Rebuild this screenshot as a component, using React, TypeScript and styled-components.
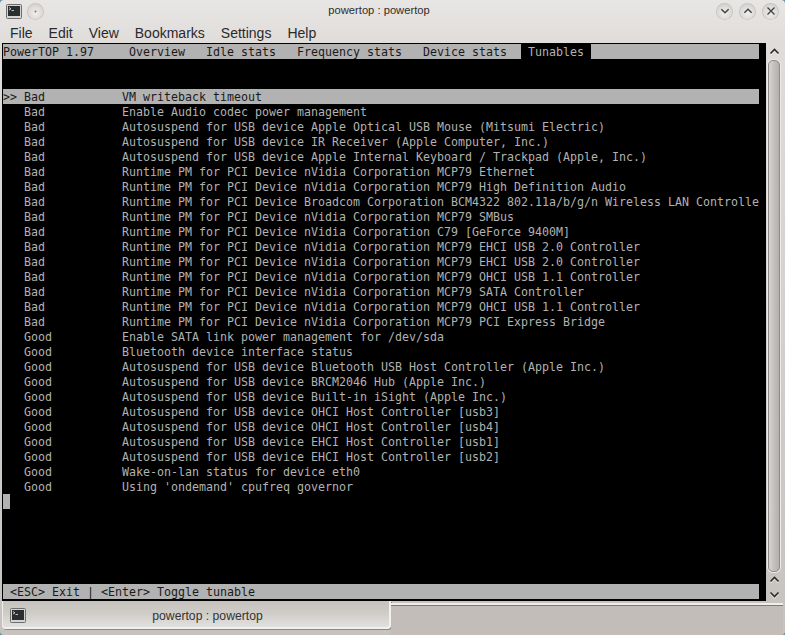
import React from 'react'
import styled, { createGlobalStyle } from 'styled-components'

const GlobalStyle = createGlobalStyle`
  html, body {
    margin: 0;
    padding: 0;
    background: #5a8fa8;
  }
  * {
    box-sizing: border-box;
  }
`

const Window = styled.div`
  width: 785px;
  height: 635px;
  display: flex;
  flex-direction: column;
  overflow: hidden;
  background: linear-gradient(180deg, #e8e6e4 0%, #dfdcda 7%, #c6c2be 100%);
  border-radius: 4px;
`

const TitleBar = styled.div`
  height: 22px;
  display: flex;
  align-items: center;
  padding: 0 7px 0 6px;
  flex: none;
`

const TitleText = styled.div`
  flex: 1;
  text-align: center;
  font: 11.2px 'Liberation Sans', sans-serif;
  color: #2e2e2e;
  padding: 0 2px 2px 0;
`

const RoundButton = styled.div<{ $gap?: number }>`
  width: 15px;
  height: 15px;
  border-radius: 50%;
  margin-left: ${({ $gap }) => $gap ?? 0}px;
  display: flex;
  align-items: center;
  justify-content: center;
  background: radial-gradient(circle at 50% 60%, #f1f0ee 0%, #dcd9d7 60%, #b9b6b3 100%);
  box-shadow: 0 0 0 1px #c6c3c0, 0 1px 1px #f4f3f2;
`

const MenuBar = styled.div`
  height: 21px;
  flex: none;
  display: flex;
  align-items: center;
  gap: 16px;
  padding: 0 0 0 10px;
  font: 14px 'Liberation Sans', sans-serif;
  color: #2a2a2a;
`

const Body = styled.div`
  flex: none;
  height: 558px;
  display: flex;
  padding-left: 2px;
`

const Terminal = styled.div`
  width: 764px;
  height: 558px;
  flex: none;
  padding: 1px 7px 0 1px;
  background: #000;
  color: #b2b2b2;
  font: 11.63px/17px 'DejaVu Sans Mono', monospace;
  white-space: pre;
`

const Header = styled.div`
  height: 15px;
  display: flex;
  background: #b2b2b2;
  color: #1a1a1a;
`

const HeaderCell = styled.span<{ $active?: boolean; $cols: number }>`
  width: ${({ $cols }) => $cols * 7}px;
  flex: none;
  background: ${({ $active }) => ($active ? '#000' : 'transparent')};
  color: ${({ $active }) => ($active ? '#b2b2b2' : '#1a1a1a')};
`

const Spacer = styled.div<{ $rows: number }>`
  height: ${({ $rows }) => $rows * 15}px;
`

const Row = styled.div<{ $selected?: boolean }>`
  height: 15px;
  display: grid;
  grid-template-columns: 21px 98px 1fr;
  overflow: hidden;
  background: ${({ $selected }) => ($selected ? '#b2b2b2' : 'transparent')};
  color: ${({ $selected }) => ($selected ? '#1a1a1a' : '#b2b2b2')};
`

const Cell = styled.span`
  overflow: hidden;
`

const Cursor = styled.div`
  width: 7px;
  height: 15px;
  background: #b2b2b2;
`

const StatusBar = styled.div`
  height: 15px;
  padding-left: 7px;
  background: #b2b2b2;
  color: #1a1a1a;
`

const Scrollbar = styled.div`
  width: 19px;
  height: 558px;
  flex: none;
  display: flex;
  flex-direction: column;
  align-items: center;
  padding-right: 3px;
`

const ArrowSlot = styled.div<{ $h: number }>`
  height: ${({ $h }) => $h}px;
  flex: none;
  display: flex;
  align-items: center;
  justify-content: center;
  filter: drop-shadow(0 1px 0 #f2f0ee);
`

const Thumb = styled.div`
  width: 12px;
  height: 512px;
  flex: none;
  border-radius: 5px;
  border: 1px solid #8f8b88;
  box-shadow: 0 0 0 1px #eeecea;
  background: linear-gradient(90deg, #d8d5d2 0%, #c6c2bf 45%, #b3afac 100%);
`

const TabBar = styled.div`
  flex: 1;
  display: flex;
  padding: 0 2px;
`

const Tab = styled.div`
  width: 389px;
  height: 28px;
  flex: none;
  display: grid;
  grid-template-columns: 34px 1fr;
  align-items: center;
  padding: 3px 4px 0 7px;
  border-left: 1px solid #f0eeec;
  border-right: 2px solid #f2f0ee;
  border-bottom: 2px solid #f2f0ee;
  border-radius: 0 0 4px 4px;
  box-shadow: 1px 1px 0 #8b8885;
  background: linear-gradient(180deg, #c6c2be 0%, #cfccc8 45%, #e2e0de 100%);
  font: 12.2px 'Liberation Sans', sans-serif;
  color: #333;
`

const TabLabel = styled.span`
  text-align: center;
  padding-right: 14px;
`

const TabFiller = styled.div`
  flex: 1;
  margin-top: 2px;
  border-top: 2px solid #f0eeec;
  box-shadow: inset 0 1px 0 #7d7a77;
  background: #c2bdb9;
`

function TerminalIcon({ w, h }: { w: number; h: number }) {
  return (
    <svg width={w} height={h} viewBox="0 0 16 15" preserveAspectRatio="none">
      <rect x="0.5" y="0.5" width="15" height="14" rx="1" fill="#d6d4d2" stroke="#6f6d6b" />
      <rect x="2" y="2" width="12" height="10" fill="#2b2e30" />
      <path d="M3 3.5 L5 4.8 L3 6 M5.5 6.5 H8" stroke="#e8e8e8" strokeWidth="0.8" fill="none" />
    </svg>
  )
}

function Chevron({ up, size = 11, color = '#2a2a2a' }: { up?: boolean; size?: number; color?: string }) {
  return (
    <svg width={size} height={size} viewBox="0 0 11 11">
      <path
        d={up ? 'M1.5 7.5 L5.5 3.5 L9.5 7.5' : 'M1.5 3.5 L5.5 7.5 L9.5 3.5'}
        stroke={color}
        strokeWidth="1.6"
        fill="none"
      />
    </svg>
  )
}

const MENU = ['File', 'Edit', 'View', 'Bookmarks', 'Settings', 'Help']

const TABS: [string, number][] = [
  ['PowerTOP 1.97', 18],
  ['Overview', 11],
  ['Idle stats', 13],
  ['Frequency stats', 18],
  ['Device stats', 14],
]

const TUNABLES: [string, string][] = [
  ['Bad', 'VM writeback timeout'],
  ['Bad', 'Enable Audio codec power management'],
  ['Bad', 'Autosuspend for USB device Apple Optical USB Mouse (Mitsumi Electric)'],
  ['Bad', 'Autosuspend for USB device IR Receiver (Apple Computer, Inc.)'],
  ['Bad', 'Autosuspend for USB device Apple Internal Keyboard / Trackpad (Apple, Inc.)'],
  ['Bad', 'Runtime PM for PCI Device nVidia Corporation MCP79 Ethernet'],
  ['Bad', 'Runtime PM for PCI Device nVidia Corporation MCP79 High Definition Audio'],
  ['Bad', 'Runtime PM for PCI Device Broadcom Corporation BCM4322 802.11a/b/g/n Wireless LAN Controlle'],
  ['Bad', 'Runtime PM for PCI Device nVidia Corporation MCP79 SMBus'],
  ['Bad', 'Runtime PM for PCI Device nVidia Corporation C79 [GeForce 9400M]'],
  ['Bad', 'Runtime PM for PCI Device nVidia Corporation MCP79 EHCI USB 2.0 Controller'],
  ['Bad', 'Runtime PM for PCI Device nVidia Corporation MCP79 EHCI USB 2.0 Controller'],
  ['Bad', 'Runtime PM for PCI Device nVidia Corporation MCP79 OHCI USB 1.1 Controller'],
  ['Bad', 'Runtime PM for PCI Device nVidia Corporation MCP79 SATA Controller'],
  ['Bad', 'Runtime PM for PCI Device nVidia Corporation MCP79 OHCI USB 1.1 Controller'],
  ['Bad', 'Runtime PM for PCI Device nVidia Corporation MCP79 PCI Express Bridge'],
  ['Good', 'Enable SATA link power management for /dev/sda'],
  ['Good', 'Bluetooth device interface status'],
  ['Good', 'Autosuspend for USB device Bluetooth USB Host Controller (Apple Inc.)'],
  ['Good', 'Autosuspend for USB device BRCM2046 Hub (Apple Inc.)'],
  ['Good', 'Autosuspend for USB device Built-in iSight (Apple Inc.)'],
  ['Good', 'Autosuspend for USB device OHCI Host Controller [usb3]'],
  ['Good', 'Autosuspend for USB device OHCI Host Controller [usb4]'],
  ['Good', 'Autosuspend for USB device EHCI Host Controller [usb1]'],
  ['Good', 'Autosuspend for USB device EHCI Host Controller [usb2]'],
  ['Good', 'Wake-on-lan status for device eth0'],
  ['Good', "Using 'ondemand' cpufreq governor"],
]

export default function App() {
  return (
    <Window>
      <GlobalStyle />
      <TitleBar>
        <TerminalIcon w={16} h={15} />
        <RoundButton $gap={6}>
          <svg width="3" height="3" viewBox="0 0 3 3">
            <circle cx="1.5" cy="1.5" r="1" fill="#777" />
          </svg>
        </RoundButton>
        <TitleText>powertop : powertop</TitleText>
        <RoundButton>
          <Chevron size={10} color="#444" />
        </RoundButton>
        <RoundButton $gap={8}>
          <Chevron up size={10} color="#444" />
        </RoundButton>
        <RoundButton $gap={8}>
          <svg width="10" height="10" viewBox="0 0 10 10">
            <path d="M1.5 1.5 L8.5 8.5 M8.5 1.5 L1.5 8.5" stroke="#444" strokeWidth="1.4" />
          </svg>
        </RoundButton>
      </TitleBar>
      <MenuBar>
        {MENU.map((item) => (
          <span key={item}>{item}</span>
        ))}
      </MenuBar>
      <Body>
        <Terminal>
          <Header>
            {TABS.map(([label, cols]) => (
              <HeaderCell key={label} $cols={cols}>
                {label}
              </HeaderCell>
            ))}
            <HeaderCell $active $cols={10}>
              {' Tunables '}
            </HeaderCell>
          </Header>
          <Spacer $rows={2} />
          {TUNABLES.map(([status, text], i) => (
            <Row key={i} $selected={i === 0}>
              <Cell>{i === 0 ? '>>' : ''}</Cell>
              <Cell>{status}</Cell>
              <Cell>{text}</Cell>
            </Row>
          ))}
          <Cursor />
          <Spacer $rows={5} />
          <StatusBar>{'<ESC> Exit | <Enter> Toggle tunable'}</StatusBar>
        </Terminal>
        <Scrollbar>
          <ArrowSlot $h={17}>
            <Chevron up />
          </ArrowSlot>
          <Thumb />
          <ArrowSlot $h={15}>
            <Chevron up />
          </ArrowSlot>
          <ArrowSlot $h={14}>
            <Chevron />
          </ArrowSlot>
        </Scrollbar>
      </Body>
      <TabBar>
        <Tab>
          <TerminalIcon w={16} h={15} />
          <TabLabel>powertop : powertop</TabLabel>
        </Tab>
        <TabFiller />
      </TabBar>
    </Window>
  )
}
